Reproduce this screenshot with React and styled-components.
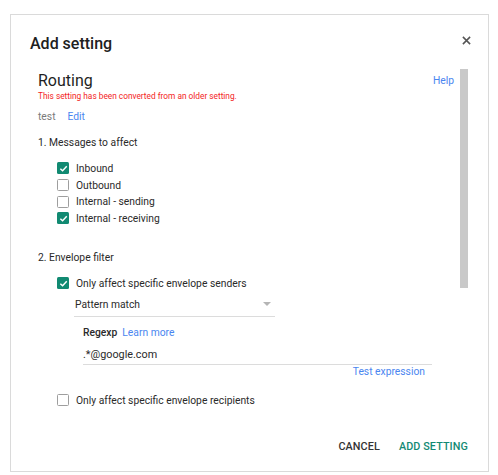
import React from 'react';
import styled, { createGlobalStyle } from 'styled-components';

const GlobalStyle = createGlobalStyle`
  body {
    margin: 0;
    background: #fff;
    font-family: Roboto, "Liberation Sans", Arial, sans-serif;
    color: #212121;
  }
`;

const Dialog = styled.div`
  margin: 14px 9px 0 10px;
  width: 477px;
  height: 456px;
  border: 1px solid #dadada;
  display: flex;
  flex-direction: column;
  background: #fff;
`;

const Header = styled.div`
  display: flex;
  justify-content: space-between;
  align-items: flex-start;
  height: 54px;
  box-sizing: border-box;
  padding: 17px 10px 0 19px;
`;

const Title = styled.h1`
  margin: 0;
  font-size: 16px;
  line-height: 24px;
  font-weight: 500;
  color: #202020;
`;

const CloseButton = styled.button`
  width: 24px;
  height: 24px;
  margin-top: -4px;
  padding: 0;
  border: none;
  background: transparent;
  display: flex;
  align-items: center;
  justify-content: center;
  cursor: pointer;
`;

const Body = styled.div`
  display: flex;
  height: 351px;
  padding: 0 20px 0 27px;
`;

const Content = styled.div`
  flex: 1;
  display: flex;
  flex-direction: column;
`;

const ScrollTrack = styled.div`
  width: 8px;
  margin-left: 6px;
`;

const ScrollThumb = styled.div`
  height: 219px;
  background: #c9c9c9;
`;

const TitleRow = styled.div`
  display: flex;
  justify-content: space-between;
  align-items: center;
  height: 22px;
`;

const SectionName = styled.h2`
  margin: 0;
  font-size: 16px;
  font-weight: 400;
  color: #1f1f1f;
`;

const Link = styled.a`
  color: #4a86f0;
  font-size: ${p => p.$size || 10.3}px;
  text-decoration: none;
  cursor: pointer;
`;

const Notice = styled.div`
  font-size: 8.3px;
  line-height: 10px;
  color: #f31c1c;
`;

const NameRow = styled.div`
  display: flex;
  gap: 12px;
  margin-top: 9px;
  font-size: 10.3px;
  line-height: 14px;
`;

const Muted = styled.span`
  color: #7a7a7a;
`;

const Heading = styled.div`
  font-size: 10.3px;
  line-height: 14px;
  color: #2a2a2a;
  margin-top: ${p => p.$top}px;
`;

const CheckList = styled.div`
  display: flex;
  flex-direction: column;
  margin-top: ${p => p.$top || 0}px;
  padding-left: 19px;
`;

const CheckRow = styled.label`
  display: flex;
  align-items: center;
  gap: 7px;
  height: ${p => p.$height || 16.7}px;
  font-size: 10.3px;
  color: #2a2a2a;
`;

const Box = styled.span`
  width: 12px;
  height: 12px;
  box-sizing: border-box;
  border-radius: 1.5px;
  border: ${p => (p.$checked ? 'none' : '1.3px solid #9e9e9e')};
  background: ${p => (p.$checked ? '#118a72' : '#fff')};
  display: flex;
  align-items: center;
  justify-content: center;
`;

const Select = styled.div`
  margin: 1px 0 0 36px;
  width: 201px;
  height: 24px;
  box-sizing: border-box;
  border-bottom: 1px solid #dcdcdc;
  display: flex;
  align-items: center;
  justify-content: space-between;
  padding: 0 4px 0 1px;
  font-size: 10.3px;
  color: #2a2a2a;
`;

const Caret = styled.span`
  width: 0;
  height: 0;
  border-left: 4px solid transparent;
  border-right: 4px solid transparent;
  border-top: 4px solid #b5b5b5;
`;

const Indented = styled.div`
  margin-left: 45px;
  width: 349px;
  display: flex;
  flex-direction: column;
`;

const FieldLabel = styled.div`
  display: flex;
  gap: 5px;
  align-items: center;
  margin-top: 9px;
  height: 14px;
  font-size: 10.3px;
`;

const Strong = styled.span`
  font-weight: 500;
  color: #2a2a2a;
`;

const Input = styled.div`
  margin-top: 5px;
  height: 20px;
  box-sizing: border-box;
  border-bottom: 1px solid #dcdcdc;
  display: flex;
  align-items: center;
  font-size: 10.8px;
  color: #2a2a2a;
`;

const RightLink = styled.div`
  display: flex;
  justify-content: flex-end;
  padding-right: 7px;
  margin-top: 1px;
  height: 12px;
  align-items: center;
`;

const Footer = styled.div`
  display: flex;
  justify-content: flex-end;
  gap: 19px;
  padding: 8px 20px 0 0;
`;

const Button = styled.button`
  height: 36px;
  padding: 0;
  border: none;
  background: transparent;
  font-family: inherit;
  font-size: 10.8px;
  font-weight: 500;
  letter-spacing: 0.1px;
  color: ${p => (p.$primary ? '#138a74' : '#333')};
  cursor: pointer;
`;

const Check = ({ checked, label, height }) => (
  <CheckRow $height={height}>
    <Box $checked={checked}>
      {checked && (
        <svg width="9" height="9" viewBox="0 0 10 10">
          <path d="M1.5 5.2 L4 7.6 L8.6 2.6" fill="none" stroke="#fff" strokeWidth="1.6" />
        </svg>
      )}
    </Box>
    {label}
  </CheckRow>
);

export default function App() {
  return (
    <>
      <GlobalStyle />
      <Dialog>
        <Header>
          <Title>Add setting</Title>
          <CloseButton aria-label="Close">
            <svg width="9" height="9" viewBox="0 0 10 10">
              <path d="M1 1 L9 9 M9 1 L1 9" stroke="#555" strokeWidth="1.7" />
            </svg>
          </CloseButton>
        </Header>
        <Body>
          <Content>
            <TitleRow>
              <SectionName>Routing</SectionName>
              <Link>Help</Link>
            </TitleRow>
            <Notice>This setting has been converted from an older setting.</Notice>
            <NameRow>
              <Muted>test</Muted>
              <Link>Edit</Link>
            </NameRow>
            <Heading $top={12}>1. Messages to affect</Heading>
            <CheckList $top={10}>
              <Check checked label="Inbound" />
              <Check label="Outbound" />
              <Check label="Internal - sending" />
              <Check checked label="Internal - receiving" />
            </CheckList>
            <Heading $top={24}>2. Envelope filter</Heading>
            <CheckList $top={10}>
              <Check checked height={17} label="Only affect specific envelope senders" />
            </CheckList>
            <Select>
              Pattern match
              <Caret />
            </Select>
            <Indented>
              <FieldLabel>
                <Strong>Regexp</Strong>
                <Link>Learn more</Link>
              </FieldLabel>
              <Input>.*@google.com</Input>
              <RightLink>
                <Link>Test expression</Link>
              </RightLink>
            </Indented>
            <CheckList $top={14}>
              <Check height={17} label="Only affect specific envelope recipients" />
            </CheckList>
          </Content>
          <ScrollTrack>
            <ScrollThumb />
          </ScrollTrack>
        </Body>
        <Footer>
          <Button>CANCEL</Button>
          <Button $primary>ADD SETTING</Button>
        </Footer>
      </Dialog>
    </>
  );
}
